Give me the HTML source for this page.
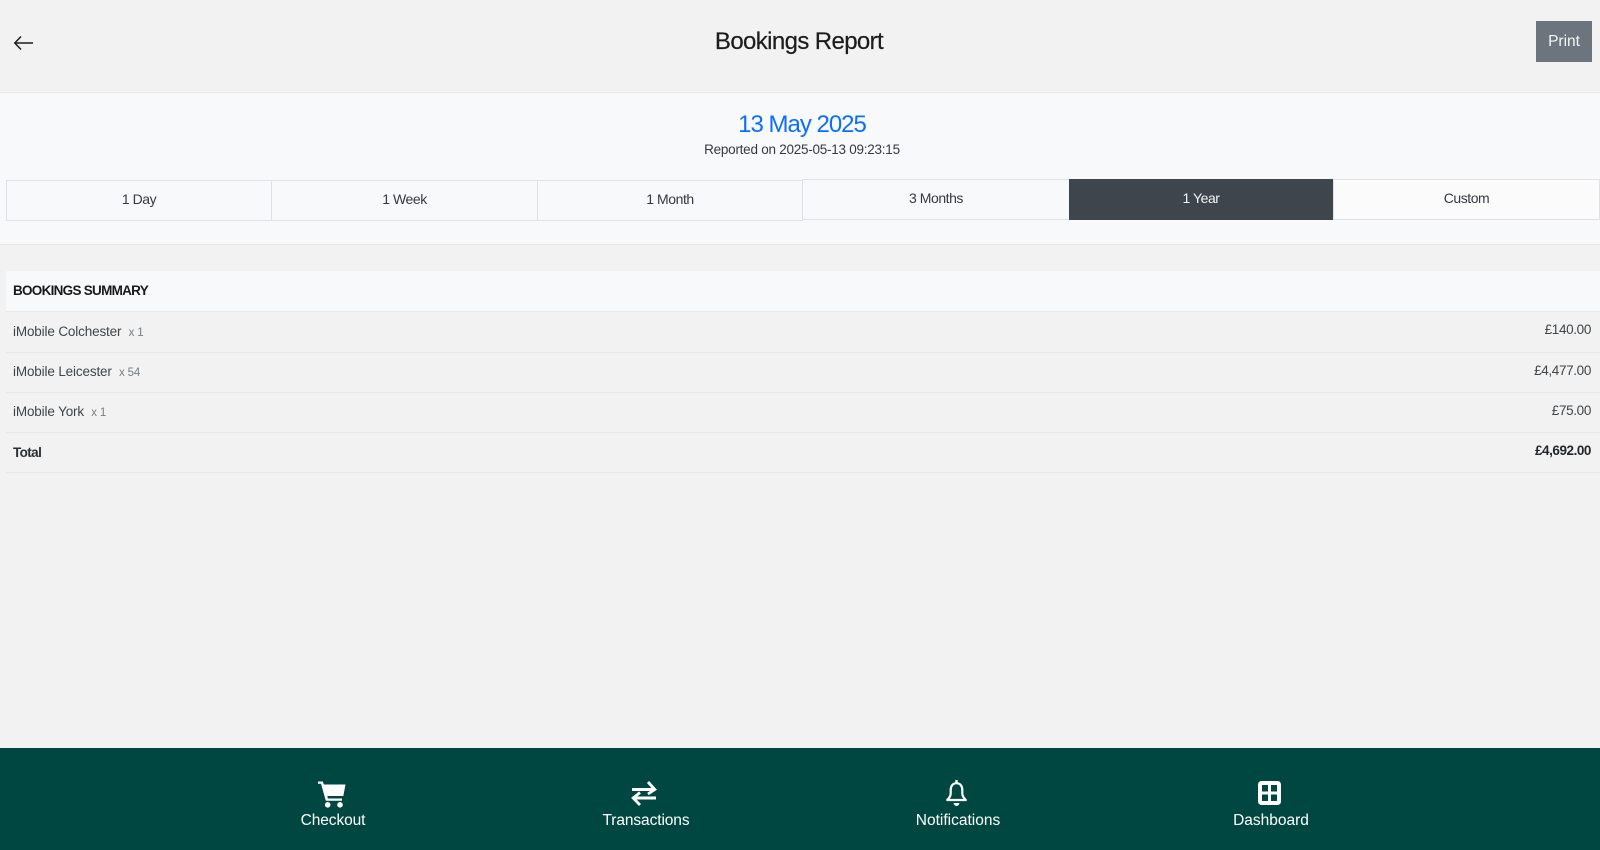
<!DOCTYPE html>
<html><head><meta charset="utf-8"><title>Bookings Report</title>
<style>
html,body{margin:0;padding:0;width:1600px;height:850px;overflow:hidden;background:#f2f2f2;font-family:"Liberation Sans",sans-serif;color:#212529}
.a{position:absolute}
.t{position:absolute;white-space:nowrap;line-height:20px;height:20px}
.c{transform:translateX(-50%);text-align:center}
.r{text-align:right}
.tab{position:absolute;box-sizing:border-box;top:180px;height:41px;border:1px solid #dfe1e4;line-height:36px;text-align:center;font-size:14px;color:#343a40;letter-spacing:-.45px}
.ln{position:absolute;left:6px;width:1594px;height:1px;background:#e6e8ea}
.n{position:absolute;top:811px;line-height:20px;font-size:15.5px;color:#fff;transform:translateX(-50%);white-space:nowrap;letter-spacing:-.1px}
.row{font-size:13.5px;color:#3f4549;letter-spacing:-.15px}
.x{font-size:11.5px;color:#777e84}
.amt{letter-spacing:-.35px}
</style></head><body>
<div class="a" style="left:0;top:92px;width:1600px;height:153px;background:#f8f9fa;border-top:1px solid #e6e8ea;border-bottom:1px solid #e6e8ea;box-sizing:border-box"></div>

<svg class="a" style="left:12px;top:31px" width="24" height="24" viewBox="0 0 24 24" fill="none" stroke="#1c1c1c"><path d="M21 12H3" stroke-width="1.500"/><path d="M9 5.500 2.800 12 9 18.500" stroke-width="1.500"/></svg>
<div class="t c" style="left:799px;top:31px;font-size:24px;line-height:22px;color:#1d1d1d;letter-spacing:-.62px;-webkit-text-stroke:.2px #1d1d1d">Bookings Report</div>
<div class="a" style="left:1536px;top:21px;width:56px;height:41px;background:#6c757d;color:#f4f5f6;font-size:15.5px;line-height:42px;text-align:center">Print</div>

<div class="t c" style="left:802px;top:114px;font-size:24px;line-height:22px;color:#0d6efd;letter-spacing:-1px">13 May 2025</div>
<div class="t c" style="left:802px;top:140px;font-size:13.5px;color:#343a40;letter-spacing:-.25px">Reported on 2025-05-13 09:23:15</div>

<div class="tab" style="left:6px;width:266px">1 Day</div>
<div class="tab" style="left:271px;width:267px">1 Week</div>
<div class="tab" style="left:537px;width:266px">1 Month</div>
<div class="tab" style="left:802px;width:268px;top:179px">3 Months</div>
<div class="tab" style="left:1069px;width:264px;top:179px;background:#3e454c;border-color:#3e454c;color:#f2f3f4">1 Year</div>
<div class="tab" style="left:1333px;width:267px;top:179px;background:#fbfbfc;">Custom</div>

<div class="a" style="left:6px;top:271px;width:1594px;height:40px;background:#f8f9fa"></div>
<div class="ln" style="top:311px"></div><div class="ln" style="top:352px"></div><div class="ln" style="top:392px"></div><div class="ln" style="top:432px"></div><div class="ln" style="top:472px"></div>

<div class="t" style="left:13px;top:281px;font-size:13.5px;font-weight:700;color:#1a1a1a;letter-spacing:-.72px">BOOKINGS SUMMARY</div>
<div class="t row" style="left:13px;top:322px">iMobile Colchester &nbsp;<span class="x">x 1</span></div>
<div class="t row" style="left:13px;top:362px">iMobile Leicester &nbsp;<span class="x">x 54</span></div>
<div class="t row" style="left:13px;top:402px">iMobile York &nbsp;<span class="x">x 1</span></div>
<div class="t row" style="left:13px;top:443px;font-weight:700;color:#2b2f33;letter-spacing:-.6px">Total</div>
<div class="t row r amt" style="right:9px;top:320px">£140.00</div>
<div class="t row r amt" style="right:9px;top:361px">£4,477.00</div>
<div class="t row r amt" style="right:9px;top:401px">£75.00</div>
<div class="t row r" style="right:9px;top:441px;font-weight:700;color:#23272b;letter-spacing:-.45px">£4,692.00</div>

<div class="a" style="left:0;top:748px;width:1600px;height:102px;background:#004741"></div>

<svg class="a" style="left:318px;top:781px" width="28" height="27" viewBox="0 0 28 27"><path fill="#fff" d="M0 .5h4.800l1 3H27.500l-2.200 11.500H9.300l.6 2.500H24v2.200H7.800L3 2.800H0z"/><circle cx="9.700" cy="23.800" r="2.800" fill="#fff"/><circle cx="22" cy="23.800" r="2.800" fill="#fff"/></svg>
<div class="n" style="left:333px">Checkout</div>

<svg class="a" style="left:631px;top:780px" width="26" height="27" viewBox="0 0 26 27" fill="none" stroke="#fff" stroke-width="3"><path d="M1 9.500H23"/><path d="M17 2l6.800 7.500L17 14" stroke-width="2.800"/><path d="M25 18H3"/><path d="M9 12.500 2.200 18 9 25" stroke-width="2.800"/></svg>
<div class="n" style="left:646px">Transactions</div>

<svg class="a" style="left:945px;top:780px" width="23" height="27" viewBox="0 0 23 27"><path fill="none" stroke="#fff" stroke-width="2.200" stroke-linejoin="round" d="M11.500 3.200c-3.600 0-5.800 2.800-5.800 6.800v3.500c0 2.500-1.500 4.500-3.500 6.500h18.600c-2-2-3.500-4-3.500-6.500V10c0-4-2.200-6.800-5.800-6.800z"/><rect x="10.300" y="0" width="2.400" height="4" fill="#fff"/><path fill="#fff" d="M8.500 23h6c-.5 2-1.700 3-3 3s-2.500-1-3-3z"/></svg>
<div class="n" style="left:958px;letter-spacing:0">Notifications</div>

<svg class="a" style="left:1258px;top:781px" width="23" height="24" viewBox="0 0 23 24"><rect width="23" height="24" rx="3.500" fill="#fff"/><rect x="4" y="4" width="6" height="6.500" fill="#004741"/><rect x="13" y="4" width="6" height="6.500" fill="#004741"/><rect x="4" y="13.500" width="6" height="6.500" fill="#004741"/><rect x="13" y="13.500" width="6" height="6.500" fill="#004741"/></svg>
<div class="n" style="left:1271px;letter-spacing:0">Dashboard</div>
</body></html>
